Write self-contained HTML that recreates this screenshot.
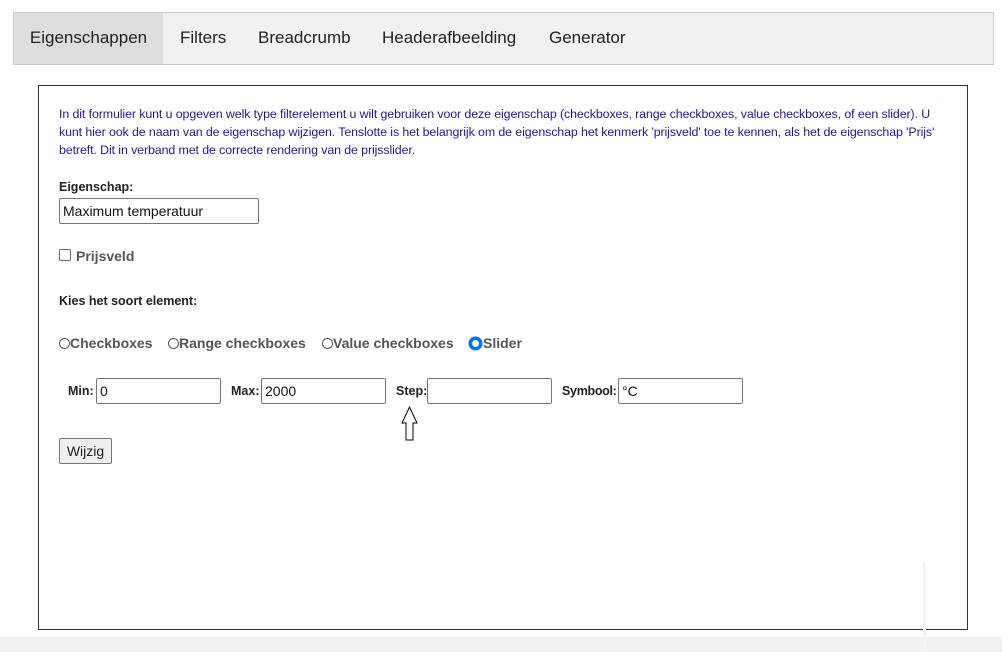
<!DOCTYPE html>
<html><head><meta charset="utf-8"><style>
body{margin:0;width:1007px;height:652px;background:#fff;position:relative;overflow:hidden;font-family:"Liberation Sans",Arial,sans-serif;}
.a{position:absolute;white-space:nowrap}
.tabs{position:absolute;left:13px;top:12px;width:979px;height:51px;background:#f1f1f1;border:1px solid #ccc;}
.tab{position:absolute;top:0;height:51px;line-height:50px;font-size:17px;color:#222;}
.box{position:absolute;left:38px;top:85px;width:928px;height:543px;border:1px solid #333;}
.p{font-size:12.4px;color:#1a1a9a;line-height:18px;letter-spacing:-0.1px}
.b{font-weight:bold;font-size:12.5px;color:#222}
.g{font-weight:bold;font-size:14px;color:#555}
.in{position:absolute;height:24px;border:1px solid #767676;border-radius:2px;box-sizing:border-box;font-size:14px;line-height:24px;padding-left:3px;color:#111;background:#fff}
.r{display:inline-block;width:11px;height:11px;border:1px solid #555;border-radius:50%;box-sizing:border-box;vertical-align:-1px}
</style></head><body>
<div class="tabs">
<div class="tab" style="left:0;width:149px;background:#ddd;text-align:center">Eigenschappen</div>
<div class="tab" style="left:166px">Filters</div>
<div class="tab" style="left:244px">Breadcrumb</div>
<div class="tab" style="left:368px">Headerafbeelding</div>
<div class="tab" style="left:535px">Generator</div>
</div>
<div class="box"></div>
<div class="a p" style="left:59px;top:105px">In dit formulier kunt u opgeven welk type filterelement u wilt gebruiken voor deze eigenschap (checkboxes, range checkboxes, value checkboxes, of een slider). U</div>
<div class="a p" style="left:59px;top:123px">kunt hier ook de naam van de eigenschap wijzigen. Tenslotte is het belangrijk om de eigenschap het kenmerk 'prijsveld' toe te kennen, als het de eigenschap 'Prijs'</div>
<div class="a p" style="left:59px;top:141px">betreft. Dit in verband met de correcte rendering van de prijsslider.</div>
<div class="a b" style="left:59px;top:180px">Eigenschap:</div>
<div class="in" style="left:59px;top:198px;width:200px;height:26px">Maximum temperatuur</div>
<div class="a" style="left:59px;top:249px;width:12px;height:12px;border:1px solid #666;border-radius:2px;box-sizing:border-box"></div>
<div class="a g" style="left:76px;top:248px">Prijsveld</div>
<div class="a b" style="left:59px;top:294px">Kies het soort element:</div>
<div class="a g" style="left:59px;top:335px"><span class="r"></span>Checkboxes</div>
<div class="a g" style="left:168px;top:335px"><span class="r"></span>Range checkboxes</div>
<div class="a g" style="left:322px;top:335px"><span class="r"></span>Value checkboxes</div>
<div class="a g" style="left:469px;top:335px"><span class="r" style="width:13px;height:13px;border:3px solid #0075ff;background:#fff;box-shadow:0 0 0 0.5px #0075ff;vertical-align:-2px"></span><span style="margin-left:1px">Slider</span></div>
<div class="a b" style="left:68px;top:384px">Min:</div>
<div class="in" style="left:96px;top:378px;width:125px;height:26px">0</div>
<div class="a b" style="left:231px;top:384px">Max:</div>
<div class="in" style="left:261px;top:378px;width:125px;height:26px">2000</div>
<div class="a b" style="left:396px;top:384px">Step:</div>
<div class="in" style="left:427px;top:378px;width:125px;height:26px"></div>
<div class="a b" style="left:562px;top:384px;letter-spacing:-0.3px">Symbool:</div>
<div class="in" style="left:618px;top:378px;width:125px;height:26px">°C</div>
<svg class="a" style="left:400px;top:405px" width="20" height="38"><path d="M9.5 2 L17 18 L13 18 L13 35 L6 35 L6 18 L2 18 Z" fill="#fff" stroke="#000" stroke-width="1"/></svg>
<div class="a" style="left:59px;top:438px;width:53px;height:26px;border:1px solid #767676;border-radius:2px;background:#efefef;box-sizing:border-box;font-size:14px;line-height:24px;text-align:center;color:#222">Wijzig</div>
<div class="a" style="left:0;top:637px;width:1002px;height:15px;background:#f0f0f0"></div>
<div class="a" style="left:923px;top:562px;width:3px;height:90px;background:#f4f4f4"></div>
</body></html>
